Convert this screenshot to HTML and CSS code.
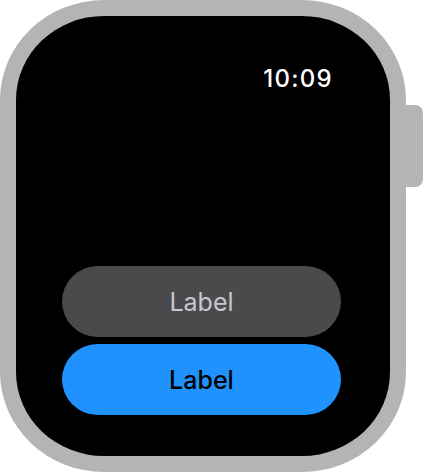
FILE: index.html
```html
<!DOCTYPE html>
<html lang="en">
<head>
<meta charset="UTF-8">
<meta name="viewport" content="width=device-width, initial-scale=1.0">
<title>Watch</title>
<link rel="stylesheet" href="styles.css">
</head>
<body>
<div class="watch">
    <div class="case">
        <div class="screen">
            <div class="time">10:09</div>
            <div class="actions">
                <button class="btn btn-secondary">Label</button>
                <button class="btn btn-primary">Label</button>
            </div>
        </div>
    </div>
    <div class="crown"></div>
</div>
</body>
</html>
```

FILE: styles.css
```css
body {
    margin: 0;
    padding: 0;
    background: #ffffff;
    font-family: Inter, 'Liberation Sans', Arial, sans-serif;
}
.watch {
    display: flex;
    align-items: flex-start;
}
.case {
    width: 374px;
    height: 440px;
    padding: 16px;
    background: #b4b4b4;
    border-radius: 104px / 100px;
}
.crown {
    width: 17px;
    height: 82px;
    margin-top: 105px;
    background: #b4b4b4;
    border-radius: 0 8px 8px 0;
}
.screen {
    height: 100%;
    background: #000000;
    border-radius: 88px / 84px;
    display: flex;
    flex-direction: column;
    box-sizing: border-box;
    padding: 51px 0 41px 0;
}
.time {
    align-self: flex-end;
    margin-right: 57px;
    color: #ffffff;
    font-size: 24px;
    font-weight: 500;
    line-height: 24px;
    letter-spacing: 1.3px;
}
.actions {
    margin-top: auto;
    margin-left: 46px;
    width: 279px;
    display: flex;
    flex-direction: column;
    gap: 7px;
}
.btn {
    height: 71px;
    border: none;
    border-radius: 36px;
    font-family: inherit;
    font-size: 25px;
    padding: 0;
}
.btn-secondary {
    background: #4a4a4c;
    color: #c7c7cc;
    font-weight: 400;
}
.btn-primary {
    background: #1f92fd;
    color: #000000;
    font-weight: 500;
}
```
